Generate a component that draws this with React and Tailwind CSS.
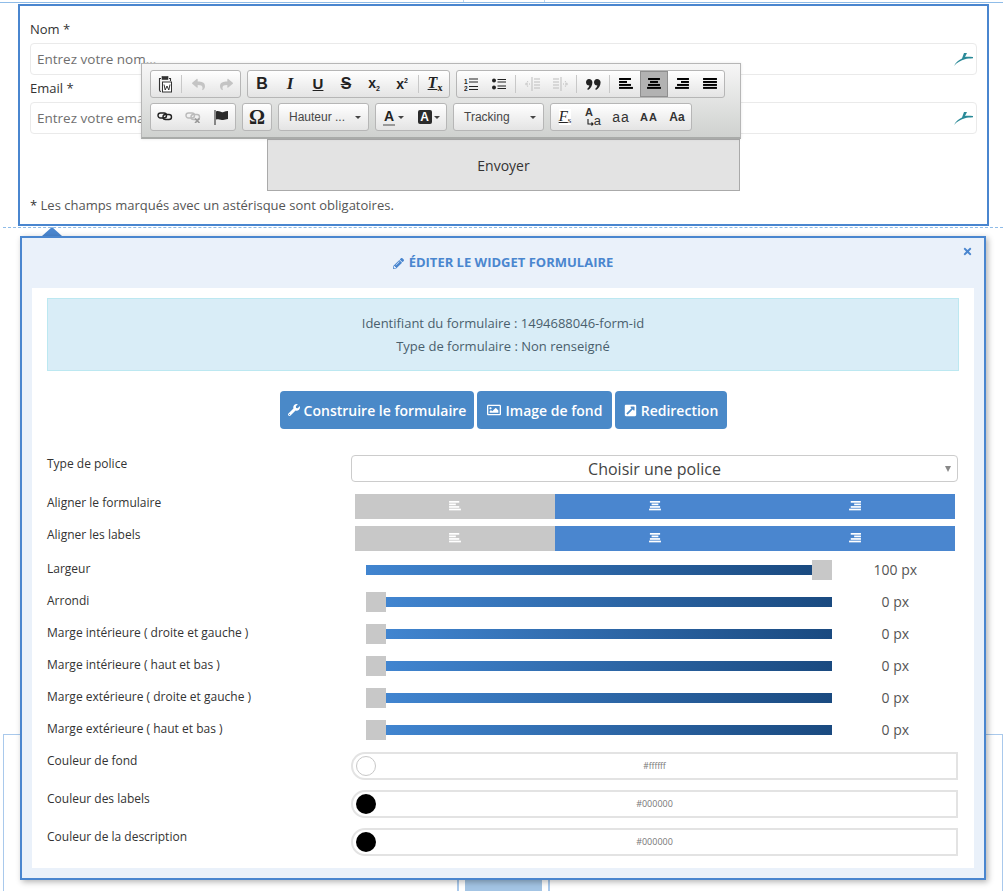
import { FaWrench, FaRegImage, FaExternalLinkSquareAlt, FaPencilAlt, FaTimes, FaReply, FaShare } from "react-icons/fa";

const sans = "font-['Open_Sans',sans-serif]";

const Swoosh = () => (
  <svg width="21" height="15" viewBox="0 0 21 15" className="absolute right-[2px] top-[8px]">
    <path d="M1 14 C3 10 6 8 9 6.5 L11 1 L14 1 L12 5 C14 4.5 17 5 20 5 L20 6.2 C17 6.4 14 6.6 12 7.2 C8 8 4 10.5 1 14 Z" fill="#2b8a98" />
  </svg>
);

const Field = ({ label, placeholder }) => (
  <div>
    <div className="h-5 text-[13px] leading-5 text-[#333]">{label}</div>
    <div className="relative mt-1 h-8 rounded-[4px] border border-[#eaeaea] bg-white pl-[6px] text-[13.5px] leading-[30px] text-[#6f6f6f]">
      {placeholder}
      <Swoosh />
    </div>
  </div>
);

const lines = {
  left: [[0, 12], [0, 8], [0, 12], [0, 14]],
  center: [[1, 12], [3, 8], [1, 12], [0, 14]],
  right: [[2, 12], [6, 8], [2, 12], [0, 14]],
  justify: [[0, 14], [0, 14], [0, 14], [0, 14]],
};

const AlignIcon = ({ kind, size = 14, className = "" }) => (
  <svg width={size} height={size * 0.85} viewBox="0 0 14 12" className={className} fill="currentColor">
    {lines[kind].map(([x, w], i) => (
      <rect key={i} x={x} y={i * 3} width={w} height="2" />
    ))}
  </svg>
);

const Paste = () => (
  <svg width="14" height="18" viewBox="0 0 14 18" fill="none" stroke="#333">
    <path d="M3 3.5 H1.5 V15 Q1.5 16.5 3 16.5" strokeWidth="1.1" />
    <path d="M11 3.5 H12.5 V6" strokeWidth="1.1" />
    <rect x="4" y="1.5" width="6" height="3" fill="#333" strokeWidth="0.6" />
    <rect x="4.5" y="7" width="9" height="10" fill="#fff" strokeWidth="1" />
    <path d="M6 9.5 L7.2 15 L9 11 L10.8 15 L12 9.5" strokeWidth="1" />
  </svg>
);

const Chain = ({ color = "#222", off = false }) => (
  <svg width="16" height="12" viewBox="0 0 16 12" fill="none" stroke={color} strokeWidth="1.4">
    <rect x="1" y="2" width="8.5" height="5" rx="2.5" />
    <rect x="6" y="3.5" width="8.5" height="5" rx="2.5" />
    {off && <path d="M10 7.5 L14.5 12 M14.5 7.5 L10 12" stroke="#999" strokeWidth="1.6" />}
  </svg>
);

const Flag = () => (
  <svg width="15" height="15" viewBox="0 0 15 15">
    <rect x="0.5" y="0" width="1" height="15" fill="#222" />
    <path d="M2 1.5 C5 0 7 3 9.5 2 C11 1.5 12.5 1 14 1 V9 C12 9 11 10 9 10 C7 10 5 8.5 2 9.5 Z" fill="#2a2a2a" />
  </svg>
);

const NumList = () => (
  <svg width="14" height="13" viewBox="0 0 14 13">
    <text x="0" y="6" fontSize="6.5" fontWeight="700" fontFamily="Liberation Sans" fill="#222">1</text>
    <text x="0" y="12.5" fontSize="6.5" fontWeight="700" fontFamily="Liberation Sans" fill="#222">2</text>
    <path d="M5 1 H14 M5 4 H14 M5 8.5 H14 M5 11.5 H14" stroke="#222" strokeWidth="1.2" />
  </svg>
);

const BulList = () => (
  <svg width="14" height="12" viewBox="0 0 14 12" fill="#222">
    <circle cx="2" cy="2.5" r="2" />
    <circle cx="2" cy="9.5" r="2" />
    <path d="M5.5 1.5 H14 M5.5 4 H14 M5.5 8 H14 M5.5 10.5 H14" stroke="#222" strokeWidth="1.2" />
  </svg>
);

const Indent = ({ flip = false }) => (
  <svg width="15" height="14" viewBox="0 0 15 14" className={flip ? "-scale-x-100" : ""} stroke="#bdbdbd" fill="none">
    <path d="M7 0 V14" />
    <path d="M9 2 H15 M9 5 H15 M9 8 H15 M9 11 H15" strokeWidth="1.1" />
    <path d="M5 7 H0.5 M3 4.5 L0.5 7 L3 9.5" strokeWidth="1.1" strokeDasharray="1 1" />
  </svg>
);

const Quote = () => (
  <svg width="15" height="11" viewBox="0 0 15 11" fill="#222">
    <path d="M3 0 C5 0 6.4 1.5 6.4 3.4 C6.4 6.5 4.5 9.5 2 11 L1.2 10 C2.4 8.8 3.2 7.6 3.4 6.6 C1.5 6.7 0 5.3 0 3.3 C0 1.4 1.3 0 3 0 Z" />
    <path d="M11 0 C13 0 14.6 1.5 14.6 3.4 C14.6 6.5 12.5 9.5 10 11 L9.2 10 C10.4 8.8 11.2 7.6 11.4 6.6 C9.5 6.7 8 5.3 8 3.3 C8 1.4 9.3 0 11 0 Z" />
  </svg>
);

const Swap = () => (
  <svg width="10" height="8" viewBox="0 0 10 8" fill="none" stroke="#222" strokeWidth="1.1">
    <path d="M3 0 V5 H8 M6.5 3.5 L8 5 L6.5 6.5" />
  </svg>
);

const Btn = ({ children, active = false }) => (
  <div className={`flex h-[26px] w-7 shrink-0 items-center justify-center ${active ? "border border-[#8f8f8f] bg-[#b2b2b2]" : ""}`}>
    {children}
  </div>
);

const Sep = () => (
  <div className="flex w-[5px] shrink-0 justify-center">
    <div className="h-[18px] w-px bg-[#c8c8c8]" />
  </div>
);

const Group = ({ children }) => (
  <div className="flex h-7 shrink-0 items-center rounded-[3px] border border-[#b6b6b6] bg-gradient-to-b from-white to-[#e4e4e4]">
    {children}
  </div>
);

const Caret = ({ className = "" }) => (
  <span className={`inline-block h-0 w-0 border-x-[3px] border-t-[3px] border-x-transparent border-t-[#444] ${className}`} />
);

const Combo = ({ label }) => (
  <div className="flex h-7 w-[91px] shrink-0 items-center justify-between rounded-[3px] border border-[#b6b6b6] bg-gradient-to-b from-white to-[#e4e4e4] pl-[10px] pr-[7px] text-[12px] text-[#474747]">
    <span>{label}</span>
    <Caret />
  </div>
);

const Toolbar = () => (
  <div className="absolute left-[141px] top-[63px] flex h-[76px] w-[600px] flex-col gap-[5px] border border-b-2 border-[#b6b6b6] border-b-[#a9aba9] bg-gradient-to-b from-[#f6f6f6] to-[#cfd1cf] pl-2 pt-[6px] font-['Liberation_Sans',sans-serif] shadow-[0_0_3px_rgba(0,0,0,0.1)]">
    <div className="flex gap-[6px]">
      <Group>
        <Btn><Paste /></Btn>
        <Sep />
        <Btn><FaReply className="text-[13px] text-[#c4c4c4]" /></Btn>
        <Btn><FaShare className="text-[13px] text-[#c4c4c4]" /></Btn>
      </Group>
      <Group>
        <Btn><span className="text-[16px] font-bold text-[#222]">B</span></Btn>
        <Btn><span className="font-['Liberation_Serif',serif] text-[17px] font-bold italic text-[#222]">I</span></Btn>
        <Btn><span className="text-[15px] font-bold text-[#222] underline">U</span></Btn>
        <Btn><span className="text-[16px] font-bold text-[#222] line-through">S</span></Btn>
        <Btn><span className="text-[14px] font-bold leading-none text-[#222]">x<span className="align-[-3px] text-[7px]">2</span></span></Btn>
        <Btn><span className="text-[14px] font-bold leading-none text-[#222]">x<span className="align-[6px] text-[7px]">2</span></span></Btn>
        <Sep />
        <Btn><span className="font-['Liberation_Serif',serif] text-[16px] font-bold italic leading-none text-[#222] underline">T<span className="align-[-3px] text-[10px] not-italic">x</span></span></Btn>
      </Group>
      <Group>
        <Btn><NumList /></Btn>
        <Btn><BulList /></Btn>
        <Sep />
        <Btn><Indent /></Btn>
        <Btn><Indent flip /></Btn>
        <Sep />
        <Btn><Quote /></Btn>
        <Sep />
        <Btn><AlignIcon kind="left" className="text-black" /></Btn>
        <Btn active><AlignIcon kind="center" className="text-black" /></Btn>
        <Btn><AlignIcon kind="right" className="text-black" /></Btn>
        <Btn><AlignIcon kind="justify" className="text-black" /></Btn>
      </Group>
    </div>
    <div className="flex gap-[6px]">
      <Group>
        <Btn><Chain /></Btn>
        <Btn><Chain color="#bbb" off /></Btn>
        <Btn><Flag /></Btn>
      </Group>
      <Group>
        <Btn><span className="font-['Liberation_Serif',serif] text-[20px] font-bold leading-none text-[#222]">Ω</span></Btn>
      </Group>
      <Combo label="Hauteur ..." />
      <Group>
        <div className="flex w-[35px] items-center justify-center gap-[3px]">
          <span className="border-b-2 border-[#999] px-[1px] text-[14px] font-bold leading-[15px] text-[#222]">A</span>
          <Caret />
        </div>
        <div className="flex w-[35px] items-center justify-center gap-[2px]">
          <span className="flex h-[14px] w-[14px] items-center justify-center rounded-[2px] bg-[#2b2b2b] text-[12px] font-bold text-white">A</span>
          <Caret />
        </div>
      </Group>
      <Combo label="Tracking" />
      <Group>
        <Btn><span className="bg-white font-['Liberation_Serif',serif] text-[15px] italic leading-none text-[#222] underline">F<span className="align-[-2px] text-[9px] not-italic">s</span></span></Btn>
        <Btn>
          <div className="relative h-5 w-4 text-[11px] font-bold leading-none text-[#333]">
            <span className="absolute left-0 top-0">A</span>
            <span className="absolute bottom-0 right-0 text-[13px] font-normal">a</span>
            <span className="absolute bottom-0 left-0"><Swap /></span>
          </div>
        </Btn>
        <Btn><span className="text-[14px] leading-none tracking-[1px] text-[#333]">aa</span></Btn>
        <Btn><span className="text-[11px] font-bold leading-none tracking-[1px] text-[#333]">AA</span></Btn>
        <Btn><span className="text-[12px] font-bold leading-none text-[#333]">Aa</span></Btn>
      </Group>
    </div>
  </div>
);

const Label = ({ children }) => (
  <div className="w-[304px] shrink-0 text-[12px] leading-[18px] text-[#333]">{children}</div>
);

const AlignRow = ({ label }) => (
  <div className="flex h-[25px]">
    <Label>{label}</Label>
    <div className="ml-[4px] grid w-[600px] grid-cols-3 text-white">
      <div className="flex items-center justify-center bg-[#c8c8c8]"><AlignIcon kind="left" size={12} /></div>
      <div className="flex items-center justify-center bg-[#4a86cf]"><AlignIcon kind="center" size={12} /></div>
      <div className="flex items-center justify-center bg-[#4a86cf]"><AlignIcon kind="right" size={12} /></div>
    </div>
  </div>
);

const SliderRow = ({ label, value, full = false }) => (
  <div className="flex h-5">
    <Label>{label}</Label>
    <div className="ml-[15px] flex w-[476px] items-center">
      {!full && <div className="h-5 w-5 shrink-0 bg-[#c8c8c8]" />}
      <div className="h-[10px] flex-1 bg-gradient-to-r from-[#4185d0] to-[#1a4a80]" />
      {full && <div className="h-5 w-5 shrink-0 bg-[#c8c8c8]" />}
    </div>
    <div className="w-[130px] text-center text-[14px] leading-5 text-[#555]">{value}</div>
  </div>
);

const ColorRow = ({ label, value, dark = false, small = false }) => (
  <div className="flex h-7">
    <Label>{label}</Label>
    <div className="relative flex w-[607px] items-center justify-center rounded-l-[14px] border-2 border-[#e3e3e3] bg-white">
      <span className={`absolute left-[3px] top-[2px] h-5 w-5 rounded-full ${dark ? "bg-black" : "border border-[#c8c8c8] bg-white"}`} />
      <span className={`text-[#777] ${small ? "text-[8.5px]" : "text-[9px]"}`}>{value}</span>
    </div>
  </div>
);

export default function App() {
  return (
    <div className={`relative h-[891px] w-[1006px] overflow-hidden bg-white ${sans}`}>
      {/* page lines behind the widget */}
      <div className="absolute left-0 top-[2px] h-px w-[1003px] bg-[#8fbce8]" />
      <div className="absolute left-[463px] top-0 h-[2px] w-px bg-[#b9d4ef]" />
      <div className="absolute left-[544px] top-0 h-[2px] w-px bg-[#b9d4ef]" />
      <div className="absolute left-[3px] top-[227px] w-[1000px] border-t border-dashed border-[#8fbce8]" />
      <div className="absolute left-[3px] top-[734px] h-[157px] w-[1000px] border-x border-t border-[#a9c9ec]" />
      <div className="absolute left-[457px] top-[870px] h-[21px] w-[93px] border-x-2 border-[#a9c9ec] px-[6px]">
        <div className="h-full bg-[#a3c4e4]" />
      </div>

      {/* form preview */}
      <div className="relative ml-[18px] mt-1 h-[222px] w-[971px] border-2 border-[#4a86cf] bg-white px-[10px] pt-[13px]">
        <Field label="Nom *" placeholder="Entrez votre nom..." />
        <div className="mt-[3px]">
          <Field label="Email *" placeholder="Entrez votre email..." />
        </div>
        <div className="ml-[237px] mt-[5px] flex h-[52px] w-[473px] items-center justify-center border border-[#aaa] bg-[#e3e3e3] text-[14px] text-[#333]">
          Envoyer
        </div>
        <div className="mt-1 h-5 text-[13px] leading-5 text-[#555]">
          <span className="text-[#333]">*</span> Les champs marqués avec un astérisque sont obligatoires.
        </div>
      </div>
      <Toolbar />

      {/* arrow */}
      <div className="absolute left-[42px] top-[227px] h-0 w-0 border-x-[10px] border-b-[9px] border-x-transparent border-b-[#4a86cf]" />

      {/* edit panel */}
      <div className="relative ml-5 mt-[10px] h-[644px] w-[966px] border-2 border-[#4a86cf] bg-[#eaf1fa] shadow-[2px_2px_6px_rgba(0,0,0,0.3)]">
        <FaTimes className="absolute right-[11px] top-[8px] text-[11px] text-[#4a86cf]" />
        <div className="flex h-[50px] items-center justify-center gap-[5px] text-[13px] font-bold text-[#4a86cf]">
          <FaPencilAlt className="text-[11px]" />
          ÉDITER LE WIDGET FORMULAIRE
        </div>
        <div className="mx-[10px] h-[580px] bg-white px-[15px] pt-[10px]">
          <div className="flex h-[73px] flex-col items-center justify-center border border-[#bce8f1] bg-[#d9edf7] text-[13px] leading-[23px] text-[#4a5f6d]">
            <div>Identifiant du formulaire : 1494688046-form-id</div>
            <div>Type de formulaire : Non renseigné</div>
          </div>

          <div className="mt-5 flex h-[38px] justify-center gap-[3px] pl-[1px] text-[14px] font-semibold text-white">
            <div className="flex w-[194px] items-center justify-center gap-[4px] rounded-[4px] bg-[#4a89c8]">
              <FaWrench className="text-[12px]" />Construire le formulaire
            </div>
            <div className="flex w-[135px] items-center justify-center gap-[5px] rounded-[4px] bg-[#4a89c8]">
              <FaRegImage className="text-[14px]" />Image de fond
            </div>
            <div className="flex w-[112px] items-center justify-center gap-[4px] rounded-[4px] bg-[#4a89c8]">
              <FaExternalLinkSquareAlt className="text-[13px]" />Redirection
            </div>
          </div>

          <div className="mt-[26px] flex h-[27px]">
            <Label>Type de police</Label>
            <div className="relative flex w-[607px] items-center justify-center rounded-[4px] border border-[#ccc] text-[16px] text-[#444]">
              Choisir une police
              <span className="absolute right-[6px] top-[10px] h-0 w-0 border-x-[3.5px] border-t-[6px] border-x-transparent border-t-[#888]" />
            </div>
          </div>

          <div className="mt-3 flex flex-col gap-[7px]">
            <AlignRow label="Aligner le formulaire" />
            <AlignRow label="Aligner les labels" />
          </div>

          <div className="mt-[9px] flex flex-col gap-3">
            <SliderRow label="Largeur" value="100 px" full />
            <SliderRow label="Arrondi" value="0 px" />
            <SliderRow label="Marge intérieure ( droite et gauche )" value="0 px" />
            <SliderRow label="Marge intérieure ( haut et bas )" value="0 px" />
            <SliderRow label="Marge extérieure ( droite et gauche )" value="0 px" />
            <SliderRow label="Marge extérieure ( haut et bas )" value="0 px" />
          </div>

          <div className="mt-3 flex flex-col gap-[10px]">
            <ColorRow label="Couleur de fond" value="#ffffff" small />
            <ColorRow label="Couleur des labels" value="#000000" dark />
            <ColorRow label="Couleur de la description" value="#000000" dark />
          </div>
        </div>
      </div>
    </div>
  );
}
